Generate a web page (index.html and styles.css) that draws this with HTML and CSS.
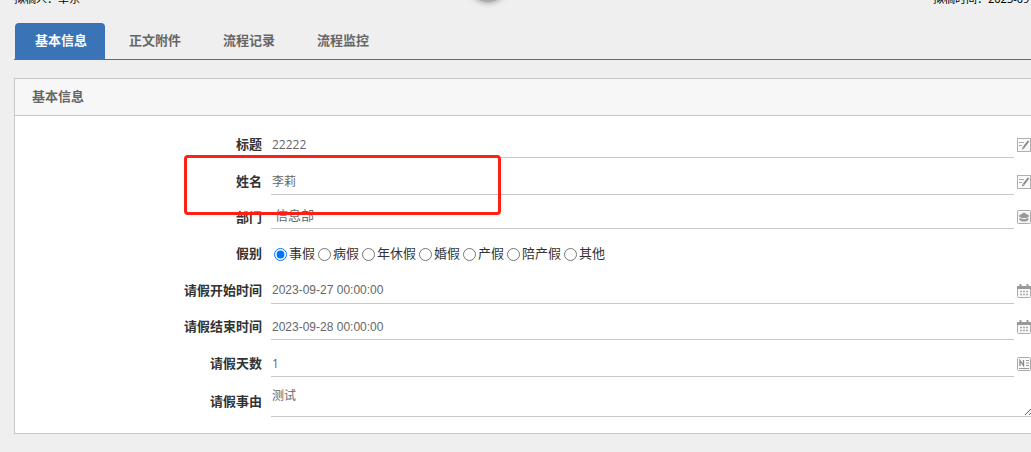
FILE: index.html
```html
<!DOCTYPE html>
<html lang="zh-CN">
<head>
<meta charset="utf-8">
<title>请假申请</title>
<link rel="stylesheet" href="styles.css">
</head>
<body>
<svg class="sprite" aria-hidden="true">
  <symbol id="edit" viewBox="0 0 14 14">
    <rect x=".5" y=".5" width="13" height="13" fill="#fafafa" stroke="#b0b0b0"/>
    <path d="M2 4.500h5M2 7.500h3" stroke="#aaa"/>
    <path d="M6.500 9.500L11.500 3" stroke="#888" stroke-width="2"/>
    <path d="M5 11.500l.5-2.500 2 1.500z" fill="#888"/>
  </symbol>
  <symbol id="dept" viewBox="0 0 14 14">
    <rect x=".5" y=".5" width="13" height="13" rx="1" fill="#f6f6f6" stroke="#aaa"/>
    <path d="M7 2.500L9.500 4 12 5.500v1L9.500 8h-5L2 6.500v-1L4.500 4z" fill="#999"/>
    <path d="M2.500 8L7 9.200 11.500 8v2L9 11.500H5L2.500 10z" fill="#999"/>
  </symbol>
  <symbol id="calendar" viewBox="0 0 14 14">
    <rect x=".5" y="2.500" width="13" height="11" rx="1" fill="#fafafa" stroke="#aaa"/>
    <path d="M0 2h14v3H0z" fill="#999"/>
    <path d="M3.500 0v3M10.500 0v3" stroke="#999" stroke-width="2"/>
    <path d="M3 7.500h2m1 0h2m1 0h2M3 10.500h2m1 0h2m1 0h2" stroke="#aaa" stroke-width="1.500"/>
  </symbol>
  <symbol id="number" viewBox="0 0 14 14">
    <rect x=".5" y=".5" width="13" height="13" rx="1" fill="#fafafa" stroke="#aaa"/>
    <path d="M3 9V3.500L6.500 8.500V3" fill="none" stroke="#888" stroke-width="1.300"/>
    <path d="M9 3.500h3M9 6h3M9 8.500h3M2 11.500h10" stroke="#999"/>
  </symbol>
</svg>
<div class="loader"></div>
<header class="meta"><span>拟稿人：单东</span><span class="meta-time">拟稿时间：2023-09</span></header>
<nav class="tabs">
  <button class="tab active" type="button">基本信息</button>
  <button class="tab" type="button">正文附件</button>
  <button class="tab" type="button">流程记录</button>
  <button class="tab" type="button">流程监控</button>
</nav>
<main class="panel">
  <h2 class="panel-title">基本信息</h2>
  <form class="form">
    <div class="row">
      <label class="label" for="title">标题</label>
      <input class="field cjk" id="title" value="22222">
      <button class="icon" type="button" aria-label="编辑标题"><svg><use href="#edit"/></svg></button>
    </div>
    <div class="row">
      <label class="label" for="name">姓名</label>
      <input class="field" id="name" value="李莉">
      <button class="icon" type="button" aria-label="编辑姓名"><svg><use href="#edit"/></svg></button>
    </div>
    <div class="row row-dept">
      <label class="label" for="dept-name">部门</label>
      <input class="field field-dept" id="dept-name" value="信息部">
      <button class="icon" type="button" aria-label="选择部门"><svg><use href="#dept"/></svg></button>
    </div>
    <div class="row row-kind" role="radiogroup" aria-labelledby="kind">
      <span class="label" id="kind">假别</span>
      <div class="choices">
        <label class="choice"><input type="radio" name="kind" checked>事假</label>
        <label class="choice"><input type="radio" name="kind">病假</label>
        <label class="choice"><input type="radio" name="kind">年休假</label>
        <label class="choice"><input type="radio" name="kind">婚假</label>
        <label class="choice"><input type="radio" name="kind">产假</label>
        <label class="choice"><input type="radio" name="kind">陪产假</label>
        <label class="choice"><input type="radio" name="kind">其他</label>
      </div>
    </div>
    <div class="row">
      <label class="label" for="start">请假开始时间</label>
      <input class="field field-date" id="start" value="2023-09-27 00:00:00">
      <button class="icon" type="button" aria-label="选择开始时间"><svg><use href="#calendar"/></svg></button>
    </div>
    <div class="row row-end">
      <label class="label" for="end">请假结束时间</label>
      <input class="field field-date" id="end" value="2023-09-28 00:00:00">
      <button class="icon" type="button" aria-label="选择结束时间"><svg><use href="#calendar"/></svg></button>
    </div>
    <div class="row">
      <label class="label" for="days">请假天数</label>
      <input class="field cjk" id="days" value="1">
      <button class="icon" type="button" aria-label="输入天数"><svg><use href="#number"/></svg></button>
    </div>
    <div class="row row-reason">
      <label class="label" for="reason">请假事由</label>
      <textarea class="field reason" id="reason">测试</textarea>
    </div>
  </form>
  <div class="highlight"></div>
</main>
</body>
</html>
```
FILE: styles.css
```css
* { box-sizing: border-box; }
body {
  margin: 0;
  padding: 0 0 18px 14px;
  overflow: hidden;
  position: relative;
  background: #efefef;
  color: #333;
  font: 13px/20px "Liberation Sans", "Noto Sans CJK SC", sans-serif;
}
button, input, textarea { font: inherit; margin: 0; }
.sprite { position: absolute; width: 0; height: 0; }
.loader {
  position: absolute;
  top: -36px;
  left: 469px;
  width: 38px;
  height: 38px;
  border-radius: 50%;
  background: #aaa;
  box-shadow: 0 0 6px #888;
}
.meta {
  display: flex;
  justify-content: space-between;
  margin-top: -11px;
  color: #000;
  white-space: nowrap;
  font-family: "Noto Sans", "Noto Sans CJK SC", sans-serif;
  font-size: 11px;
}
.meta-time { flex: 0 0 98px; }
.tabs {
  display: flex;
  gap: 4px;
  margin-top: 14px;
  padding-left: 1px;
  border-bottom: 1px solid #3b74b6;
}
.tab {
  height: 36px;
  padding: 0 18px 0 20px;
  border: 0;
  border-radius: 4px 4px 0 0;
  background: none;
  color: #666;
  font-weight: bold;
}
.tab.active { background: #3b74b6; color: #fff; }
.panel {
  position: relative;
  margin-top: 18px;
  border: 1px solid #c8c8c8;
  border-right: 0;
  background: #fff;
}
.panel-title {
  margin: 0;
  padding: 8px 17px;
  border-bottom: 1px solid #c8c8c8;
  background: #f7f7f7;
  color: #666;
  font-size: 13px;
  line-height: 20px;
}
.form {
  display: flex;
  flex-direction: column;
  gap: 12px;
  padding: 17px 0 16px;
}
.row {
  display: grid;
  grid-template-columns: 247px minmax(0, 1fr) 14px;
  grid-template-rows: minmax(0, 1fr);
  align-items: center;
  height: 25px;
}
.label {
  padding-bottom: 2px;
  text-align: right;
  font-weight: bold;
}
.field {
  align-self: stretch;
  min-width: 0;
  min-height: 0;
  margin: 0 3px 0 9px;
  padding: 0 1px;
  border: 0;
  border-bottom: 1px solid #c8c8c8;
  border-radius: 0;
  background: none;
  color: #666;
  font-size: 12px;
  outline: 0;
}
.cjk { font-family: "Open Sans", "Noto Sans CJK SC", sans-serif; }
.field-dept { padding: 0 4px 4px; font-size: 13px; line-height: 16px; }
.field-date { padding-bottom: 2px; }
.icon {
  width: 14px;
  height: 14px;
  margin-bottom: 2px;
  padding: 0;
  border: 0;
  background: none;
}
.icon svg { display: block; width: 14px; height: 14px; }
.row-dept { height: 22px; }
.row-kind { height: 26px; }
.row-dept .label, .row-kind .label { padding-bottom: 0; }
.row-end { height: 24px; }
.row-reason {
  grid-template-columns: 247px minmax(0, 1fr);
  height: 28px;
}
.choices {
  display: flex;
  gap: 3px;
  padding-left: 12px;
  white-space: nowrap;
}
.choice { display: flex; align-items: center; gap: 2px; }
.choice input { width: 13px; height: 13px; margin: 0; }
.reason {
  margin-right: -2px;
  padding-top: 0;
  line-height: 14px;
  resize: both;
}
.highlight {
  position: absolute;
  top: 76px;
  left: 169px;
  width: 317px;
  height: 60px;
  border: 3px solid #ff2015;
  border-radius: 4px;
  pointer-events: none;
}
```
